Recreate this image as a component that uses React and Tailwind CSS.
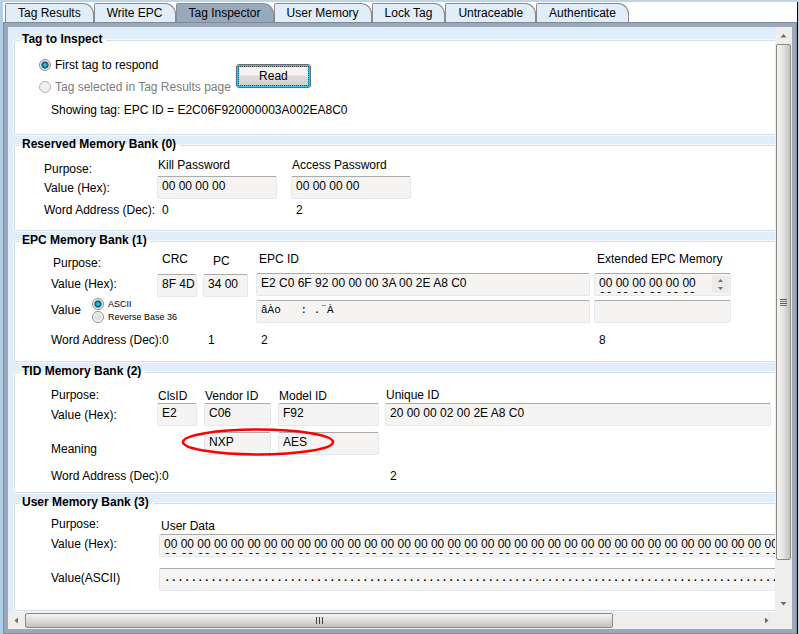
import React, { useState } from "react";

const TABS = [
  "Tag Results",
  "Write EPC",
  "Tag Inspector",
  "User Memory",
  "Lock Tag",
  "Untraceable",
  "Authenticate",
];

const zeros = (count) => Array(count).fill("00").join(" ");

const FIELD =
  "h-[23px] rounded-[2px] border border-[#e3e9ef] border-t-[#ababab] bg-[#f5f4f2]";

function Field({ className = "", ...props }) {
  return (
    <input
      type="text"
      readOnly
      className={`${FIELD} pb-[3px] pl-1 outline-none ${className}`}
      {...props}
    />
  );
}

// Multi-line box that is only tall enough for its first line.
function HexArea({ className = "", children, ...props }) {
  return (
    <div className={`${FIELD} flex pt-[2px] pb-[2px] ${className}`}>
      <textarea
        readOnly
        rows={1}
        wrap="off"
        className="h-[17px] min-w-0 flex-1 resize-none overflow-hidden px-1 leading-[14px] outline-none"
        {...props}
      />
      {children}
    </div>
  );
}

function Group({ title, className = "", children }) {
  return (
    <fieldset className="relative rounded-[3px] border border-[#d3e0e8] bg-white shadow-[0_0_0_1px_#f1f7fc]">
      <legend className="ml-[5px] h-[14px] pr-1 pl-[2px] font-bold leading-[12px]">{title}</legend>
      <div className={className}>{children}</div>
    </fieldset>
  );
}

function Radio({ label, small, ...props }) {
  return (
    <label
      className={
        small
          ? "flex h-[13px] items-center gap-1 text-[9px]"
          : "flex h-[22px] items-center gap-1 has-disabled:text-[#7d7d7d]"
      }
    >
      <input
        type="radio"
        className="size-3 shrink-0 appearance-none rounded-full border border-[#8e8f8f] bg-[radial-gradient(circle,#e9e9e9_0,#dcdcdc_45%,#f8f8f8_60%)] checked:bg-[radial-gradient(circle_at_center,#5fd3ec_0,#1595b8_25%,#0b4a63_45%,#c9d3d8_55%,#f4f4f4_70%)] disabled:border-[#b5b5b5] disabled:bg-none disabled:bg-[#f0f0f0]"
        {...props}
      />
      {label}
    </label>
  );
}

function Arrow({ d, label, className }) {
  return (
    <button type="button" aria-label={label} className={`flex items-center justify-center ${className}`}>
      <svg width="7" height="7" viewBox="0 0 7 7" fill="#6e6e6e">
        <path d={d} />
      </svg>
    </button>
  );
}

const UP = "M3.5 2 6.5 5.5H0.5z";
const DOWN = "M0.5 2H6.5L3.5 5.5z";
const LEFT = "M5 0.5V6.5L1.5 3.5z";
const RIGHT = "M2 0.5 5.5 3.5 2 6.5z";

function VerticalScroll() {
  return (
    <div className="flex w-[17px] shrink-0 flex-col bg-[#efeeec]">
      <Arrow d={UP} label="Scroll up" className="h-[17px]" />
      <div className="flex flex-1 flex-col px-px">
        <div className="flex grow-[516] basis-0 flex-col items-center justify-center gap-px rounded-[2px] border border-[#8d8a83] bg-linear-to-r from-[#f6f5f4] via-[#e3e2e0] to-[#c3c1bd]">
          <i className="h-px w-[7px] bg-[#555]" />
          <i className="h-px w-[7px] bg-[#777]" />
          <i className="h-px w-[7px] bg-[#555]" />
          <i className="h-px w-[7px] bg-[#777]" />
        </div>
        <div className="grow-[35] basis-0" />
      </div>
      <Arrow d={DOWN} label="Scroll down" className="h-[17px]" />
    </div>
  );
}

function HorizontalScroll() {
  return (
    <div className="flex h-[17px] shrink-0 bg-[#efeeec] pr-[17px]">
      <Arrow d={LEFT} label="Scroll left" className="w-[17px]" />
      <div className="flex flex-1 py-px">
        <div className="flex grow-[588] basis-0 items-center justify-center gap-[2px] rounded-[2px] border border-[#8d8a83] bg-linear-to-b from-[#f6f5f4] via-[#dddcda] to-[#c3c1bd]">
          <i className="h-[7px] w-px bg-[#444]" />
          <i className="h-[7px] w-px bg-[#444]" />
          <i className="h-[7px] w-px bg-[#444]" />
        </div>
        <div className="grow-[145] basis-0" />
      </div>
      <Arrow d={RIGHT} label="Scroll right" className="w-[17px]" />
    </div>
  );
}

function TagToInspect() {
  return (
    <Group title="Tag to Inspect" className="pt-[7px] pb-3 pl-6">
      <div className="flex items-center gap-[5px]">
        <div>
          <Radio name="source" label="First tag to respond" defaultChecked />
          <Radio name="source" label="Tag selected in Tag Results page" disabled />
        </div>
        <button
          type="button"
          className="h-6 w-[75px] rounded-[3px] border border-[#5f6f78] bg-linear-to-b from-[#f4f3f2] from-45% via-[#dfddda] via-50% to-[#d0cdc8] inset-ring-2 inset-ring-[#35c4ee] outline-1 -outline-offset-3 outline-dotted outline-[#444]"
        >
          Read
        </button>
      </div>
      <p className="pl-3 leading-6">Showing tag: EPC ID = E2C06F920000003A002EA8C0</p>
    </Group>
  );
}

function ReservedBank() {
  return (
    <Group
      title="Reserved Memory Bank (0)"
      className="grid grid-cols-[113px_134px_120px] grid-rows-[20px_23px_22px] pt-1 pb-[9px] pl-[29px]"
    >
      <span className="self-end leading-[14px]">Purpose:</span>
      <label htmlFor="kill" className="px-px leading-[18px]">Kill Password</label>
      <label htmlFor="access" className="px-px leading-[18px]">Access Password</label>
      <span className="self-center">Value (Hex):</span>
      <Field id="kill" defaultValue="00 00 00 00" className="w-[120px]" />
      <Field id="access" defaultValue="00 00 00 00" className="w-[120px]" />
      <span className="self-center whitespace-nowrap">Word Address (Dec):</span>
      <span className="self-center px-[5px]">0</span>
      <span className="self-center px-[5px]">2</span>
    </Group>
  );
}

function EpcBank() {
  return (
    <Group
      title="EPC Memory Bank (1)"
      className="grid grid-cols-[106px_46px_53px_338px_137px] grid-rows-[21px_24px_26px_33px] pt-1 pb-[5px] pl-9"
    >
      <span className="px-[2px] leading-[22px]">Purpose:</span>
      <label htmlFor="crc" className="px-[5px] leading-[14px]">CRC</label>
      <label htmlFor="pc" className="px-[10px] leading-[18px]">PC</label>
      <label htmlFor="epc" className="px-[3px] leading-[14px]">EPC ID</label>
      <label htmlFor="ext" className="px-[3px] leading-[14px]">Extended EPC Memory</label>

      <span className="leading-[22px]">Value (Hex):</span>
      <Field id="crc" defaultValue="8F 4D" className="w-10 self-end" />
      <Field id="pc" defaultValue="34 00" className="w-[45px] self-end" />
      <Field id="epc" defaultValue="E2 C0 6F 92 00 00 00 3A 00 2E A8 C0" className="w-[334px]" />
      <HexArea id="ext" defaultValue={`${zeros(6)}\n${zeros(6)}`} className="w-[137px]">
        <span className="mr-px flex w-[17px] flex-col bg-[#ebeae8]">
          <Arrow d="M3.5 2 6 5H1z" label="Previous line" className="h-[9px]" />
          <Arrow d="M1 2H6L3.5 5z" label="Next line" className="h-[9px]" />
        </span>
      </HexArea>

      <div className="col-span-3 flex items-center">
        <span className="w-[41px]">Value</span>
        <div>
          <Radio small name="encoding" label="ASCII" defaultChecked />
          <Radio small name="encoding" label="Reverse Base 36" />
        </div>
      </div>
      <Field
        aria-label="EPC ID value"
        defaultValue="âÀo   : .¨À"
        className="w-[334px] self-end font-['Liberation_Mono',monospace] text-[11px]"
      />
      <Field aria-label="Extended EPC value" defaultValue="" className="w-[137px] self-end" />

      <span className="self-center whitespace-nowrap">Word Address (Dec):</span>
      <span className="self-center px-[5px]">0</span>
      <span className="self-center px-[5px]">1</span>
      <span className="self-center px-[5px]">2</span>
      <span className="self-center px-[5px]">8</span>
    </Group>
  );
}

function TidBank() {
  return (
    <Group
      title="TID Memory Bank (2)"
      className="grid grid-cols-[106px_47px_74px_107px_386px] grid-rows-[18px_23px_33px_33px] pt-[6px] pl-9"
    >
      <span className="leading-[20px]">Purpose:</span>
      <label htmlFor="cls" className="px-px leading-[22px]">ClsID</label>
      <label htmlFor="vendor" className="px-px leading-[22px]">Vendor ID</label>
      <label htmlFor="model" className="px-px leading-[22px]">Model ID</label>
      <label htmlFor="unique" className="px-px leading-[20px]">Unique ID</label>

      <span className="self-center">Value (Hex):</span>
      <Field id="cls" defaultValue="E2" className="w-10" />
      <Field id="vendor" defaultValue="C06" className="w-[67px]" />
      <Field id="model" defaultValue="F92" className="w-[101px]" />
      <Field id="unique" defaultValue="20 00 00 02 00 2E A8 C0" className="w-full" />

      <span className="col-span-2 self-end leading-[20px]">Meaning</span>
      <Field aria-label="Vendor meaning" defaultValue="NXP" className="mt-[6px] w-[67px]" />
      <Field aria-label="Model meaning" defaultValue="AES" className="col-span-2 mt-[6px] w-[101px]" />

      <span className="self-center whitespace-nowrap">Word Address (Dec):</span>
      <span className="col-span-3 self-center px-[5px]">0</span>
      <span className="self-center px-[5px]">2</span>

      <svg
        className="pointer-events-none absolute top-12 left-[166px]"
        width="156"
        height="30"
        viewBox="0 0 156 30"
        fill="none"
      >
        <ellipse cx="77" cy="15" rx="75" ry="12.5" stroke="#fe0000" strokeWidth="2.6" />
      </svg>
    </Group>
  );
}

function UserBank() {
  return (
    <Group
      title="User Memory Bank (3)"
      className="grid grid-cols-[108px_1fr] grid-rows-[18px_23px_34px] pt-[6px] pb-[19px] pl-9"
    >
      <span className="leading-[16px]">Purpose:</span>
      <label htmlFor="user-hex" className="px-[2px] leading-[20px]">User Data</label>
      <span className="leading-[20px]">Value (Hex):</span>
      <HexArea id="user-hex" defaultValue={`${zeros(48)}\n${zeros(48)}`} />
      <label htmlFor="user-ascii" className="self-end leading-[26px]">Value(ASCII)</label>
      <Field
        id="user-ascii"
        defaultValue={".".repeat(128)}
        className="w-full self-end font-['Liberation_Mono',monospace] text-[11px] font-bold"
      />
    </Group>
  );
}

export default function App() {
  const [active, setActive] = useState("Tag Inspector");

  return (
    <div className="flex min-h-screen border-t-2 border-r border-l-3 border-t-[#bcd6e8] border-r-[#c6d0dc] border-l-[#b1cfe5] bg-white font-['Liberation_Sans',Arial,sans-serif] text-[12px] leading-[14px] text-black">
      <div className="flex min-w-0 flex-1 flex-col border-r border-black">
        <div role="tablist" className="flex h-5 shrink-0 pt-px pl-[2px]">
          {TABS.map((tab) => (
            <button
              key={tab}
              type="button"
              role="tab"
              aria-selected={tab === active}
              onClick={() => setActive(tab)}
              className="rounded-tl-[2px] rounded-tr-[11px] border border-b-0 border-[#8b8b8b] bg-[#e1edf9] px-[12px] whitespace-nowrap aria-selected:bg-[#99a9bd]"
            >
              {tab}
            </button>
          ))}
        </div>

        <div className="flex flex-1 flex-col border border-[#858a90]">
          <div role="tabpanel" className="flex flex-1 flex-col border-4 border-[#99a9bd]">
            <div className="flex flex-1">
              <div className="min-w-0 flex-1 overflow-hidden bg-[#e1edf9]">
                <div className="flex min-w-[960px] flex-col gap-[3px] pt-[6px] pb-px pl-[6px]">
                  <TagToInspect />
                  <ReservedBank />
                  <EpcBank />
                  <TidBank />
                  <UserBank />
                </div>
              </div>
              <VerticalScroll />
            </div>
            <HorizontalScroll />
          </div>
        </div>
      </div>
    </div>
  );
}
